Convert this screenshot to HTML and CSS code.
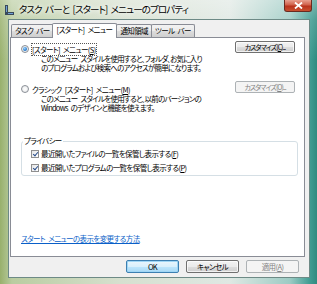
FILE: index.html
```html
<!DOCTYPE html>
<html lang="ja">
<head>
<meta charset="utf-8">
<link rel="stylesheet" href="styles.css">
</head>
<body>
<div class="window">
  <div class="titlebar">
    <svg class="appicon" width="11" height="12" viewBox="0 0 11 12">
      <rect x="1" y="1" width="3" height="10" fill="#3a4a5a"/>
      <rect x="1" y="8" width="9" height="3" fill="#3a4a5a"/>
      <rect x="2" y="2" width="1" height="6" fill="#6fa0d8"/>
      <rect x="4" y="9" width="5" height="1" fill="#6fa0d8"/>
    </svg>
    <span class="title">タスク バーと [スタート] メニューのプロパティ</span>
    <div class="close"><svg width="9" height="7" viewBox="0 0 9 7"><path d="M1 0.5 L8 6.5 M8 0.5 L1 6.5" stroke="#fff" stroke-width="1.8"/></svg></div>
  </div>
  <div class="client">
    <div class="tabs">
      <div class="tab">タスク バー</div>
      <div class="tab active">[スタート] メニュー</div>
      <div class="tab">通知領域</div>
      <div class="tab">ツール バー</div>
    </div>
    <div class="panel">
      <div class="option">
        <span class="radio checked"></span>
        <div class="opt-text">
          <div class="opt-label"><span class="focus">[スタート] メニュー(<span class="u">S</span>)</span></div>
          <div class="opt-desc">このメニュー スタイルを使用すると、フォルダ、お気に入り<br>のプログラムおよび検索へのアクセスが簡単になります。</div>
        </div>
        <button class="btn">カスタマイズ(<span class="u">C</span>)...</button>
      </div>
      <div class="option">
        <span class="radio"></span>
        <div class="opt-text">
          <div class="opt-label">クラシック [スタート] メニュー(<span class="u">M</span>)</div>
          <div class="opt-desc">このメニュー スタイルを使用すると、以前のバージョンの<br>Windows のデザインと機能を使えます。</div>
        </div>
        <button class="btn disabled">カスタマイズ(<span class="u">O</span>)...</button>
      </div>
      <div class="group">
        <div class="group-label">プライバシー</div>
        <div class="check-row"><span class="check"></span><span>最近開いたファイルの一覧を保管し表示する(<span class="u">F</span>)</span></div>
        <div class="check-row"><span class="check"></span><span>最近開いたプログラムの一覧を保管し表示する(<span class="u">P</span>)</span></div>
      </div>
      <div class="spacer"></div>
      <a class="link">スタート メニューの表示を変更する方法</a>
    </div>
    <div class="buttons">
      <button class="btn wide default">OK</button>
      <button class="btn wide">キャンセル</button>
      <button class="btn wide disabled">適用(<span class="u">A</span>)</button>
    </div>
  </div>
</div>
</body>
</html>
```
FILE: styles.css
```css
* { box-sizing: border-box; }
html, body { margin: 0; padding: 0; }
body {
  width: 317px; height: 284px; overflow: hidden;
  font-family: "Noto Sans CJK JP", "Noto Sans", sans-serif;
  font-feature-settings: "palt";
  letter-spacing: -0.6px;
  word-spacing: 2px;
  background: #7fae9c;
}
.window {
  width: 317px; height: 284px;
  display: flex; flex-direction: column;
  padding: 0 7px 6px 8px;
  background:
    linear-gradient(180deg, rgba(255,255,255,0.35) 0px, rgba(255,255,255,0.15) 20px, rgba(255,255,255,0) 60px),
    linear-gradient(90deg, #98b06c 0px, #b9cca0 12px, #d6e0cf 120px, #dfe8e3 230px, #9ccbc4 290px, #3f9c92 310px, #2f8b80 317px);
}
.titlebar {
  height: 19px; flex: none;
  display: flex; align-items: flex-start;
  margin: 0 -7px 0 -8px; padding: 0 5px 0 4px;
}
.appicon { margin-top: 4px; flex: none; }
.title {
  margin-left: 4px; margin-top: 3px;
  font-size: 9.5px; line-height: 13px; color: #000;
  letter-spacing: -0.85px; word-spacing: 2px;
  text-shadow: 0 0 4px #fff, 0 0 6px #fff;
  white-space: nowrap; flex: 1;
}
.close {
  width: 28px; height: 12px; flex: none;
  border: 1px solid #6a2a20; border-top: none;
  border-radius: 0 0 3px 3px;
  background: linear-gradient(180deg, #e8a090 0%, #d0604a 45%, #b8321c 55%, #c85030 100%);
  display: flex; align-items: center; justify-content: center;
}
.client {
  flex: 1;
  background: #f0f0f0;
  border: 1px solid #6d8a86;
  display: flex; flex-direction: column;
  padding: 2px 4px 4px 1px;
}
.tabs {
  display: flex; align-items: flex-end; height: 15px; padding-left: 1px; flex: none;
}
.tab {
  height: 13px; padding: 0 3px;
  font-size: 7.5px; line-height: 12px; color: #000;
  border: 1px solid #898c95; border-bottom: none; margin-right: -1px;
  background: linear-gradient(180deg, #f2f2f2 0%, #ebebeb 50%, #dddddd 51%, #cfcfcf 100%);
  border-radius: 2px 2px 0 0;
  white-space: nowrap;
}
.tab.active {
  height: 15px; background: #fff; position: relative; z-index: 1; margin-bottom: -1px; padding: 0 4px;
  margin-left: -1px; margin-right: -1px;
}
.panel {
  flex: 1;
  background: #fff;
  border: 1px solid #898c95;
  display: flex; flex-direction: column;
  padding: 7px 9px 12px 10px;
}
.option { display: flex; align-items: flex-start; margin-bottom: 13px; }
.radio {
  width: 8px; height: 8px; border-radius: 50%; flex: none;
  border: 1px solid #8a8f96; background: radial-gradient(circle, #fff 0%, #e4e6e8 100%);
  margin-top: 0; margin-right: 2px; position: relative;
}
.radio.checked::after {
  content: ""; position: absolute; left: 1px; top: 1px; width: 4px; height: 4px; border-radius: 50%;
  background: radial-gradient(circle at 40% 35%, #9fd4ff 0%, #2c7fd0 60%, #1a5aa0 100%);
}
.opt-text { flex: 1; font-size: 7.5px; line-height: 9px; color: #000; white-space: nowrap; }
.opt-label { padding-left: 1px; }
.focus { outline: 1px dotted #555; outline-offset: 0; }
.opt-desc { padding-left: 10px; letter-spacing: -0.75px; }
.u { text-decoration: underline; text-underline-offset: 1px; }
.btn {
  font-family: inherit; font-feature-settings: "palt"; letter-spacing: -0.6px; word-spacing: 0;
  font-size: 7.5px; line-height: 10px; padding: 0; color: #000;
  border: 1px solid #707070; border-radius: 2px;
  background: linear-gradient(180deg, #f2f2f2 0%, #ebebeb 50%, #dddddd 51%, #cfcfcf 100%);
  box-shadow: inset 0 0 0 1px rgba(255,255,255,0.7);
  height: 12px; width: 60px; flex: none; margin-top: -4px; white-space: nowrap;
  display: flex; align-items: center; justify-content: center; overflow: visible;
}
.panel .btn { letter-spacing: -1px; font-size: 7px; }
.btn.disabled { border-color: #adb2b5; background: #f4f4f4; color: #838383; box-shadow: none; }
.group {
  margin-top: 16px;
  border: 1px solid #d5dfe5; border-radius: 3px;
  padding: 5px 0 0 9px; position: relative;
  width: 277px;
}
.group-label {
  position: absolute; left: 1px; top: -6px; background: #fff; padding: 0 1px;
  font-size: 7.5px; line-height: 10px;
}
.check-row { display: flex; align-items: center; font-size: 7.5px; line-height: 14px; white-space: nowrap; }
.check {
  width: 8px; height: 8px; flex: none; margin-right: 2px;
  border: 1px solid #8f8f8f; background: linear-gradient(135deg, #e6e6e6, #fff);
  position: relative;
}
.check::after {
  content: ""; position: absolute; left: 1.5px; top: 0px; width: 2px; height: 4px;
  border: solid #2a4e8c; border-width: 0 1.5px 1.5px 0; transform: rotate(40deg);
}
.spacer { flex: 1; }
.link { font-size: 7.5px; line-height: 10px; color: #0a5fc8; text-decoration: underline; cursor: pointer; }
.buttons { display: flex; justify-content: flex-end; gap: 7px; padding-top: 3px; margin-right: 6px; flex: none; }
.btn.wide { width: 53px; height: 13px; margin-top: 0; }
.btn.default { border-color: #3c7fb1; box-shadow: inset 0 0 0 1px #9fd6f5; background: linear-gradient(180deg, #eaf6fd 0%, #d9f0fc 50%, #bee6fd 51%, #a7d9f5 100%); }
```
